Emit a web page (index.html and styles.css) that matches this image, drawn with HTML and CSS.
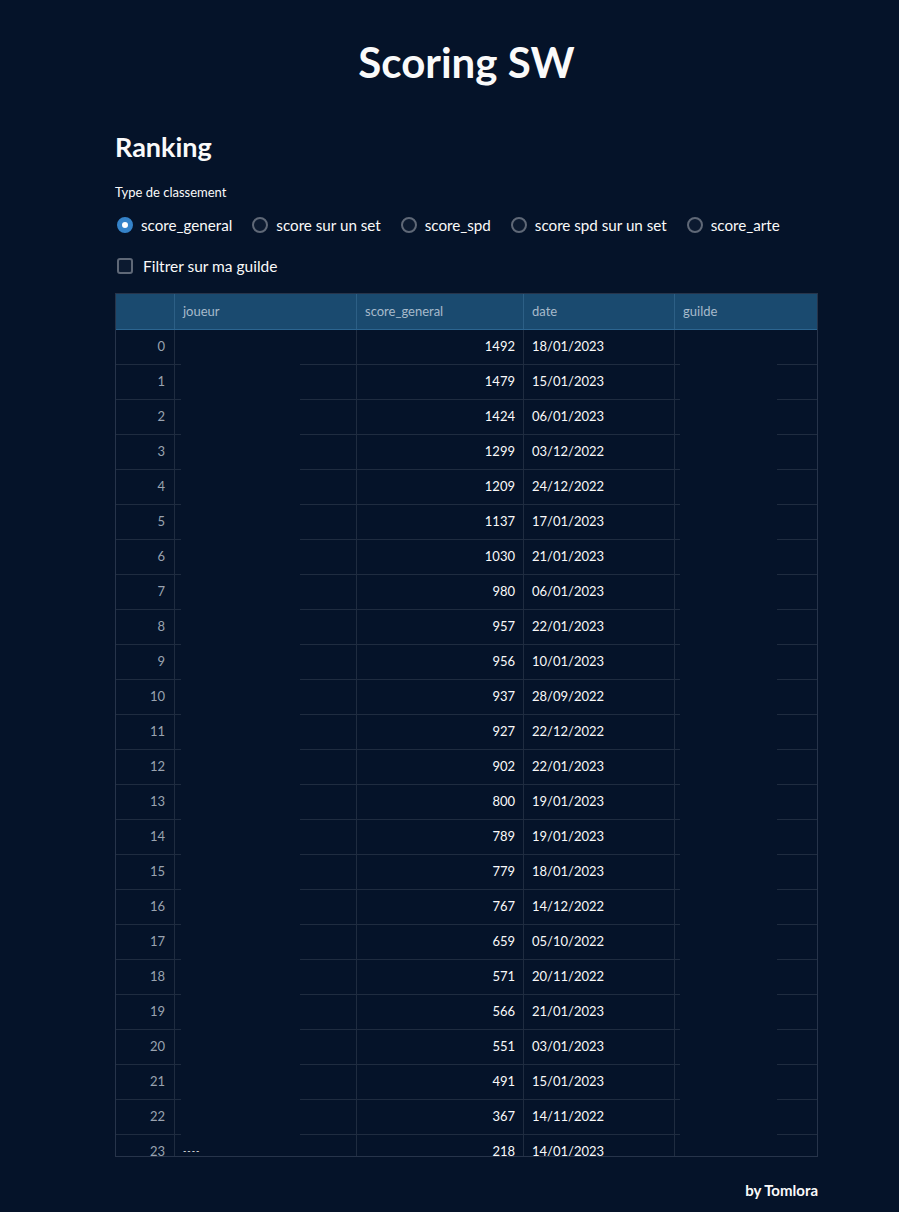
FILE: index.html
```html
<!DOCTYPE html>
<html lang="fr">
<head>
<meta charset="utf-8">
<title>Scoring SW</title>
<link rel="stylesheet" href="styles.css">
</head>
<body>
<div class="app">
  <main class="main">
    <h1 class="title">Scoring SW</h1>
    <h2 class="section">Ranking</h2>
    <div class="widget-label">Type de classement</div>
    <div class="radios">
      <label class="radio checked"><span class="dot"></span>score_general</label>
      <label class="radio"><span class="dot"></span>score sur un set</label>
      <label class="radio"><span class="dot"></span>score_spd</label>
      <label class="radio"><span class="dot"></span>score spd sur un set</label>
      <label class="radio"><span class="dot"></span>score_arte</label>
    </div>
    <label class="checkbox"><span class="box"></span>Filtrer sur ma guilde</label>

    <div class="grid">
      <div class="row head">
        <div class="c idx"></div>
        <div class="c name">joueur</div>
        <div class="c score">score_general</div>
        <div class="c date">date</div>
        <div class="c guild">guilde</div>
      </div>
      <div class="body" id="body">
        <div class="row"><div class="c idx">0</div><div class="c name"></div><div class="c score">1492</div><div class="c date">18/01/2023</div><div class="c guild"></div></div>
        <div class="row"><div class="c idx">1</div><div class="c name"></div><div class="c score">1479</div><div class="c date">15/01/2023</div><div class="c guild"></div></div>
        <div class="row"><div class="c idx">2</div><div class="c name"></div><div class="c score">1424</div><div class="c date">06/01/2023</div><div class="c guild"></div></div>
        <div class="row"><div class="c idx">3</div><div class="c name"></div><div class="c score">1299</div><div class="c date">03/12/2022</div><div class="c guild"></div></div>
        <div class="row"><div class="c idx">4</div><div class="c name"></div><div class="c score">1209</div><div class="c date">24/12/2022</div><div class="c guild"></div></div>
        <div class="row"><div class="c idx">5</div><div class="c name"></div><div class="c score">1137</div><div class="c date">17/01/2023</div><div class="c guild"></div></div>
        <div class="row"><div class="c idx">6</div><div class="c name"></div><div class="c score">1030</div><div class="c date">21/01/2023</div><div class="c guild"></div></div>
        <div class="row"><div class="c idx">7</div><div class="c name"></div><div class="c score">980</div><div class="c date">06/01/2023</div><div class="c guild"></div></div>
        <div class="row"><div class="c idx">8</div><div class="c name"></div><div class="c score">957</div><div class="c date">22/01/2023</div><div class="c guild"></div></div>
        <div class="row"><div class="c idx">9</div><div class="c name"></div><div class="c score">956</div><div class="c date">10/01/2023</div><div class="c guild"></div></div>
        <div class="row"><div class="c idx">10</div><div class="c name"></div><div class="c score">937</div><div class="c date">28/09/2022</div><div class="c guild"></div></div>
        <div class="row"><div class="c idx">11</div><div class="c name"></div><div class="c score">927</div><div class="c date">22/12/2022</div><div class="c guild"></div></div>
        <div class="row"><div class="c idx">12</div><div class="c name"></div><div class="c score">902</div><div class="c date">22/01/2023</div><div class="c guild"></div></div>
        <div class="row"><div class="c idx">13</div><div class="c name"></div><div class="c score">800</div><div class="c date">19/01/2023</div><div class="c guild"></div></div>
        <div class="row"><div class="c idx">14</div><div class="c name"></div><div class="c score">789</div><div class="c date">19/01/2023</div><div class="c guild"></div></div>
        <div class="row"><div class="c idx">15</div><div class="c name"></div><div class="c score">779</div><div class="c date">18/01/2023</div><div class="c guild"></div></div>
        <div class="row"><div class="c idx">16</div><div class="c name"></div><div class="c score">767</div><div class="c date">14/12/2022</div><div class="c guild"></div></div>
        <div class="row"><div class="c idx">17</div><div class="c name"></div><div class="c score">659</div><div class="c date">05/10/2022</div><div class="c guild"></div></div>
        <div class="row"><div class="c idx">18</div><div class="c name"></div><div class="c score">571</div><div class="c date">20/11/2022</div><div class="c guild"></div></div>
        <div class="row"><div class="c idx">19</div><div class="c name"></div><div class="c score">566</div><div class="c date">21/01/2023</div><div class="c guild"></div></div>
        <div class="row"><div class="c idx">20</div><div class="c name"></div><div class="c score">551</div><div class="c date">03/01/2023</div><div class="c guild"></div></div>
        <div class="row"><div class="c idx">21</div><div class="c name"></div><div class="c score">491</div><div class="c date">15/01/2023</div><div class="c guild"></div></div>
        <div class="row"><div class="c idx">22</div><div class="c name"></div><div class="c score">367</div><div class="c date">14/11/2022</div><div class="c guild"></div></div>
        <div class="row"><div class="c idx">23</div><div class="c name"><span class="dash">----</span></div><div class="c score">218</div><div class="c date">14/01/2023</div><div class="c guild"></div></div>
        <div class="row"><div class="c idx">24</div><div class="c name"></div><div class="c score">201</div><div class="c date">12/01/2023</div><div class="c guild"></div></div>
      </div>
    </div>

    <div class="footer">by Tomlora</div>
  </main>
</div>
</body>
</html>
```
FILE: styles.css
```css
* { box-sizing: border-box; }
html, body { margin: 0; padding: 0; }
body {
  background: #051329;
  color: #fafafa;
  font-family: Lato, "Noto Sans", sans-serif;
  width: 899px;
  height: 1212px;
  overflow: hidden;
}
.app { padding-top: 35px; }
.main {
  width: 703px;
  margin-left: 115px;
}
.title {
  margin: 0;
  text-align: center;
  font-size: 42px;
  font-weight: 700;
  line-height: 54px;
}
.section {
  margin: 40px 0 0;
  font-size: 27px;
  font-weight: 700;
  line-height: 36px;
}
.widget-label {
  margin-top: 18px;
  font-size: 13px;
  line-height: 18px;
}
.radios {
  display: flex;
  gap: 20px;
  margin-top: 13px;
  margin-left: 2px;
  font-size: 15.2px;
  line-height: 22px;
}
.radio {
  display: flex;
  align-items: center;
  gap: 8px;
}
.dot {
  width: 16px;
  height: 16px;
  border-radius: 50%;
  border: 2px solid #5f6877;
  background: #0c1a30;
}
.radio.checked .dot {
  border: 5px solid #3583c9;
  background: #ffffff;
}
.checkbox {
  display: flex;
  align-items: center;
  gap: 10px;
  margin-top: 19px;
  margin-left: 2px;
  font-size: 15.5px;
  line-height: 22px;
}
.box {
  width: 16px;
  height: 16px;
  border-radius: 3px;
  border: 2px solid #5f6877;
  background: #0c1a30;
}
.grid {
  margin-top: 16px;
  border: 1px solid #27344a;
  font-size: 13px;
}
.row {
  display: grid;
  grid-template-columns: 59px 182px 167px 151px 142px;
  height: 35px;
}
.c {
  height: 35px;
  display: flex;
  align-items: center;
  padding: 0 8px 4px;
  border-right: 1px solid #1f2c40;
  background-image: linear-gradient(#1f2c40, #1f2c40);
  background-repeat: no-repeat;
  background-position: left bottom;
  background-size: 100% 1px;
  white-space: nowrap;
  overflow: hidden;
}
.c:last-child { border-right: none; }
.head {
  background: #1a4a6f;
  height: 36px;
  border-bottom: 1px solid #2c6590;
}
.head .c {
  height: 35px;
  padding-bottom: 2px;
  color: #a7bacb;
  background-image: none;
  border-right-color: #2d5f85;
  font-size: 13px;
  justify-content: flex-start;
}
.body {
  height: 826px;
  overflow: hidden;
}
.idx {
  justify-content: flex-end;
  color: #9aa3b0;
  padding-right: 9px;
}
.score { justify-content: flex-end; }
.body .name {
  background-image: linear-gradient(#1f2c40, #1f2c40), linear-gradient(#1f2c40, #1f2c40);
  background-position: left bottom, right bottom;
  background-size: 6px 1px, 56px 1px;
}
.body .guild {
  background-image: linear-gradient(#1f2c40, #1f2c40), linear-gradient(#1f2c40, #1f2c40);
  background-position: left bottom, right bottom;
  background-size: 5px 1px, 40px 1px;
}
.dash {
  font-size: 9px;
  letter-spacing: 1px;
  margin-top: 0;
}
.footer {
  margin-top: 22px;
  text-align: right;
  font-size: 15px;
  font-weight: 700;
  line-height: 22px;
}
```
